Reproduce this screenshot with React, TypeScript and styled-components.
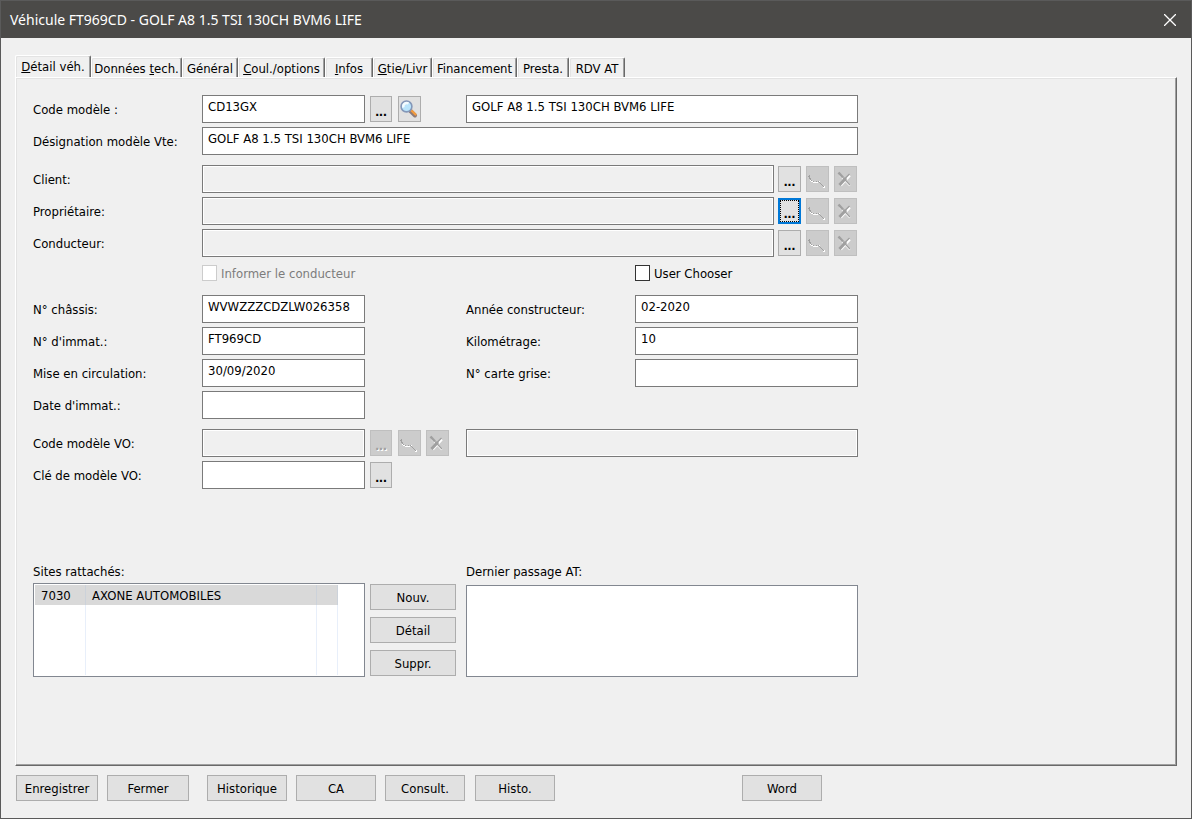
import React from "react";
import styled, { createGlobalStyle, css } from "styled-components";

const FONT = '"DejaVu Sans Condensed", Tahoma, Verdana, sans-serif';

const GlobalStyle = createGlobalStyle`
  *, *::before, *::after { box-sizing: border-box; }
  body { margin: 0; background: #f0f0f0; }
  body, button, input, textarea { font: 13px/16px ${FONT}; color: #000; }
`;

const Window = styled.div`
  min-height: 100vh;
  display: flex;
  flex-direction: column;
  border: 1px solid #5a5a5a;
  background: #f0f0f0;
`;

const TitleBar = styled.header`
  display: flex;
  align-items: center;
  justify-content: space-between;
  height: 37px;
  padding-left: 9px;
  background: #4b4a48;
  color: #fff;
`;

const Title = styled.h1`
  margin: 0;
  font: 400 14px/20px "Noto Sans", "Segoe UI", sans-serif;
`;

const CloseButton = styled.button`
  display: grid;
  place-items: center;
  width: 42px;
  height: 36px;
  padding: 0;
  border: 0;
  background: none;
`;

const Body = styled.main`
  flex: 1;
  display: flex;
  flex-direction: column;
  padding: 17px 14px;
`;

const Tabs = styled.div`
  display: flex;
  align-items: flex-end;
  height: 22px;
`;

const Tab = styled.button<{ $width: number; $active?: boolean }>`
  width: ${(p) => p.$width}px;
  height: 20px;
  padding: 2px 0 0;
  white-space: nowrap;
  border: 0;
  border-top: 1px solid #fff;
  border-left: 1px solid #fff;
  border-right: 1px solid #696969;
  border-radius: 2px 2px 0 0;
  background: #f0f0f0;
  box-shadow: inset -1px 0 #a0a0a0, inset 1px 1px #e3e3e3;
  ${(p) =>
    p.$active &&
    css`
      height: 24px;
      margin-bottom: -2px;
      padding: 0 0 2px;
    `}
`;

const Panel = styled.section`
  flex: 1;
  padding: 17px;
  border: 1px solid;
  border-color: #fff #696969 #696969 #fff;
  box-shadow: inset -1px -1px #a0a0a0, inset 1px 1px #e3e3e3;
`;

const Form = styled.form`
  max-width: 825px;
`;

const Group = styled.div<{ $top?: number }>`
  display: grid;
  grid-template-columns: 169px 163px 101px 169px 1fr;
  row-gap: 4px;
  align-items: center;
  margin-top: ${(p) => p.$top ?? 0}px;
`;

const Label = styled.label`
  padding-top: 2px;
  white-space: nowrap;
`;

const Field = styled.input<{ $span?: number }>`
  grid-column: span ${(p) => p.$span ?? 1};
  min-width: 0;
  width: 100%;
  height: 28px;
  padding: 0 5px 6px;
  border: 1px solid #7a7a7a;
  border-radius: 0;
  background: #fff;
  outline: 0;
  &:disabled {
    background: #f0f0f0;
    box-shadow: inset 0 0 0 1px #fff;
  }
`;

const Wide = styled.div`
  grid-column: 2 / -1;
  display: flex;
  align-items: center;
  padding-right: 1px;
`;

const Tools = styled.div`
  display: grid;
  grid-template-columns: repeat(3, 23px);
  gap: 5px;
  padding-left: 5px;
  ${Wide} & { padding-left: 4px; }
`;

const ToolButton = styled.button<{ $focused?: boolean; $compact?: boolean }>`
  display: flex;
  align-items: center;
  justify-content: center;
  width: ${(p) => (p.$compact ? 22 : 23)}px;
  height: 26px;
  padding: 0;
  border: 1px solid #adadad;
  background: #e1e1e1;
  font: 700 14px/16px "Liberation Sans", Arial, sans-serif;
  &:disabled {
    border-color: #bfbfbf;
    background: #cccccc;
    color: #a0a0a0;
    text-shadow: 1px 1px #fff;
  }
  ${(p) =>
    p.$focused &&
    css`
      border: 2px solid #0078d7;
      outline: 1px dotted #000;
      outline-offset: -3px;
    `}
`;

const Dots = styled.span`
  padding-top: 3px;
`;

const CheckLabel = styled.label<{ $muted?: boolean; $column: number }>`
  grid-column: ${(p) => p.$column} / span 2;
  display: flex;
  align-items: center;
  gap: 4px;
  color: ${(p) => (p.$muted ? "#7c7c7c" : "#000")};
`;

const CheckText = styled.span`
  height: 16px;
  line-height: 18px;
`;

const Check = styled.input`
  appearance: none;
  width: 15px;
  height: 16px;
  margin: 0;
  border: 1px solid #333;
  background: #fff;
  &:disabled { border-color: #cccccc; }
`;

const Bottom = styled.div`
  display: grid;
  grid-template-columns: 332px 101px 1fr;
  margin-top: 74px;
`;

const Caption = styled.label`
  display: block;
  height: 20px;
  line-height: 18px;
`;

const ListBox = styled.div`
  height: 94px;
  padding: 1px;
  border: 1px solid #828790;
  background: #fff;
`;

const Table = styled.table`
  width: 303px;
  height: 90px;
  table-layout: fixed;
  border-collapse: separate;
  border-spacing: 0;
  td {
    padding: 2px 6px 0;
    border-right: 1px solid #e8effa;
  }
`;

const SelectedRow = styled.tr`
  height: 20px;
  background: #d9d9d9;
  td { border-right-color: #ccd2da; }
`;

const Notes = styled.textarea`
  display: block;
  width: 100%;
  height: 92px;
  margin-top: 2px;
  border: 1px solid #828790;
  border-radius: 0;
  background: #fff;
  resize: none;
`;

const ListActions = styled.div`
  display: flex;
  flex-direction: column;
  gap: 7px;
  padding: 21px 0 0 5px;
`;

const PushButton = styled.button<{ $width: number; $before?: number }>`
  width: ${(p) => p.$width}px;
  height: 26px;
  margin-left: ${(p) => p.$before ?? 0}px;
  padding: 1px 0 0;
  border: 1px solid #adadad;
  background: #e1e1e1;
`;

const Footer = styled.footer`
  display: flex;
  padding: 9px 0 0 1px;
`;

const ToolSvg = styled.svg.attrs({ width: 21, height: 24, viewBox: "0 0 21 24", fill: "none", "aria-hidden": true })`
  flex: none;
`;

const SearchIcon = () => (
  <ToolSvg>
    <path d="M11.5 14l4.500 4.500" stroke="#8d7a78" strokeWidth="4" strokeLinecap="round" />
    <path d="M12.5 13.500l4 4" stroke="#f39a3c" strokeWidth="2.4" strokeLinecap="round" />
    <circle cx="7.5" cy="9.5" r="5.4" fill="#b9e4fb" stroke="#8497b8" strokeWidth="1.6" />
    <path d="M4.5 10.5a3.4 3.4 0 0 1 5-4" stroke="#f4fcff" strokeWidth="2.4" />
  </ToolSvg>
);

const LinkIcon = () => (
  <ToolSvg shapeRendering="crispEdges">
    <path
      d="M3 12h1v1h1v1h1v1h5v-1h1v1h-1v1h-5v-1h-2v-1h-1zM16 20h1v-1h1v2h-2zM12 14h1v1h-1z"
      fill="#fff"
    />
    <path
      d="M2 8h1v3h1v2h1v1h2v1h3v-1h2v1h1v1h1v1h1v1h1v1h1v1h-1v-1h-1v-1h-1v-1h-1v-1h-1v-1h-1v-1h-2v1h-3v-1h-2v-1h-1v-1h-1v-2h-1z"
      fill="#a0a0a0"
    />
  </ToolSvg>
);

const DeleteIcon = () => (
  <ToolSvg>
    <path d="M5 8l10 10.500M15 8.500l-9 10" stroke="#fff" strokeWidth="2" />
    <path d="M3.500 5.500l4.500 5" stroke="#a0a0a0" strokeWidth="2.600" />
    <path d="M8 10.500l7 7.500M14.500 7l-4 4" stroke="#a0a0a0" strokeWidth="1.400" />
    <path d="M11 11l-6.500 7" stroke="#a0a0a0" strokeWidth="3" />
  </ToolSvg>
);

type MoreProps = { disabled?: boolean; focused?: boolean; compact?: boolean };

const More = ({ disabled, focused, compact }: MoreProps) => (
  <ToolButton type="button" aria-label="Choisir" disabled={disabled} $focused={focused} $compact={compact}>
    <Dots>...</Dots>
  </ToolButton>
);

const EditTools = () => (
  <>
    <ToolButton type="button" aria-label="Modifier" disabled><LinkIcon /></ToolButton>
    <ToolButton type="button" aria-label="Supprimer" disabled><DeleteIcon /></ToolButton>
  </>
);

const LookupRow = ({ id, label, focused }: { id: string; label: string; focused?: boolean }) => (
  <>
    <Label htmlFor={id}>{label}</Label>
    <Wide>
      <Field id={id} disabled />
      <Tools>
        <More focused={focused} />
        <EditTools />
      </Tools>
    </Wide>
  </>
);

const Entry = ({ id, label, value }: { id: string; label: string; value?: string }) => (
  <>
    <Label htmlFor={id}>{label}</Label>
    <Field id={id} defaultValue={value} />
  </>
);

const Gap = styled.span``;

const TABS: { width: number; text: React.ReactNode }[] = [
  { width: 76, text: <><u>D</u>étail véh.</> },
  { width: 91, text: <>Données <u>t</u>ech.</> },
  { width: 56, text: "Général" },
  { width: 87, text: <><u>C</u>oul./options</> },
  { width: 48, text: <><u>I</u>nfos</> },
  { width: 59, text: <><u>G</u>tie/Livr</> },
  { width: 85, text: "Financement" },
  { width: 52, text: "Presta." },
  { width: 56, text: "RDV AT" },
];

const ACTIONS = [
  { text: "Enregistrer", width: 82, before: 0 },
  { text: "Fermer", width: 82, before: 9 },
  { text: "Historique", width: 80, before: 18 },
  { text: "CA", width: 80, before: 9 },
  { text: "Consult.", width: 80, before: 9 },
  { text: "Histo.", width: 80, before: 10 },
  { text: "Word", width: 80, before: 187 },
];

export default function App() {
  return (
    <Window>
      <GlobalStyle />
      <TitleBar>
        <Title>Véhicule FT969CD - GOLF A8 1.5 TSI 130CH BVM6 LIFE</Title>
        <CloseButton aria-label="Fermer la fenêtre">
          <svg width="12" height="12" viewBox="0 0 12 12" stroke="#fff" strokeWidth="1.3">
            <path d="M0 0l12 12M12 0L0 12" />
          </svg>
        </CloseButton>
      </TitleBar>
      <Body>
        <Tabs role="tablist">
          {TABS.map((tab, i) => (
            <Tab key={i} role="tab" aria-selected={i === 0} $active={i === 0} $width={tab.width}>
              {tab.text}
            </Tab>
          ))}
        </Tabs>
        <Panel>
          <Form>
            <Group>
              <Label htmlFor="code">Code modèle :</Label>
              <Field id="code" defaultValue="CD13GX" />
              <Tools>
                <More compact />
                <ToolButton type="button" aria-label="Rechercher"><SearchIcon /></ToolButton>
              </Tools>
              <Field $span={2} aria-label="Modèle" defaultValue="GOLF A8 1.5 TSI 130CH BVM6 LIFE" />
              <Label htmlFor="designation">Désignation modèle Vte:</Label>
              <Field id="designation" $span={4} defaultValue="GOLF A8 1.5 TSI 130CH BVM6 LIFE" />
            </Group>
            <Group $top={10}>
              <LookupRow id="client" label="Client:" />
              <LookupRow id="owner" label="Propriétaire:" focused />
              <LookupRow id="driver" label="Conducteur:" />
            </Group>
            <Group $top={8}>
              <CheckLabel $column={2} $muted>
                <Check type="checkbox" disabled />
                <CheckText>Informer le conducteur</CheckText>
              </CheckLabel>
              <CheckLabel $column={5}>
                <Check type="checkbox" />
                <CheckText>User Chooser</CheckText>
              </CheckLabel>
            </Group>
            <Group $top={14}>
              <Entry id="chassis" label="N° châssis:" value="WVWZZZCDZLW026358" />
              <Gap />
              <Entry id="year" label="Année constructeur:" value="02-2020" />
              <Entry id="plate" label="N° d'immat.:" value="FT969CD" />
              <Gap />
              <Entry id="km" label="Kilométrage:" value="10" />
              <Entry id="first" label="Mise en circulation:" value="30/09/2020" />
              <Gap />
              <Entry id="card" label="N° carte grise:" />
              <Entry id="platedate" label="Date d'immat.:" />
            </Group>
            <Group $top={10}>
              <Label htmlFor="vo">Code modèle VO:</Label>
              <Field id="vo" disabled />
              <Tools>
                <More disabled compact />
                <EditTools />
              </Tools>
              <Field $span={2} aria-label="Modèle VO" disabled />
              <Entry id="vokey" label="Clé de modèle VO:" />
              <Tools><More compact /></Tools>
            </Group>
            <Bottom>
              <div>
                <Caption as="div" id="sites">Sites rattachés:</Caption>
                <ListBox>
                  <Table aria-labelledby="sites">
                    <colgroup>
                      <col width="51" />
                      <col width="231" />
                      <col width="21" />
                    </colgroup>
                    <tbody>
                      <SelectedRow><td>7030</td><td>AXONE AUTOMOBILES</td><td /></SelectedRow>
                      <tr><td /><td /><td /></tr>
                    </tbody>
                  </Table>
                </ListBox>
              </div>
              <ListActions>
                <PushButton type="button" $width={86}>Nouv.</PushButton>
                <PushButton type="button" $width={86}>Détail</PushButton>
                <PushButton type="button" $width={86}>Suppr.</PushButton>
              </ListActions>
              <div>
                <Caption htmlFor="visit">Dernier passage AT:</Caption>
                <Notes id="visit" />
              </div>
            </Bottom>
          </Form>
        </Panel>
        <Footer>
          {ACTIONS.map((a) => (
            <PushButton key={a.text} type="button" $width={a.width} $before={a.before}>{a.text}</PushButton>
          ))}
        </Footer>
      </Body>
    </Window>
  );
}
